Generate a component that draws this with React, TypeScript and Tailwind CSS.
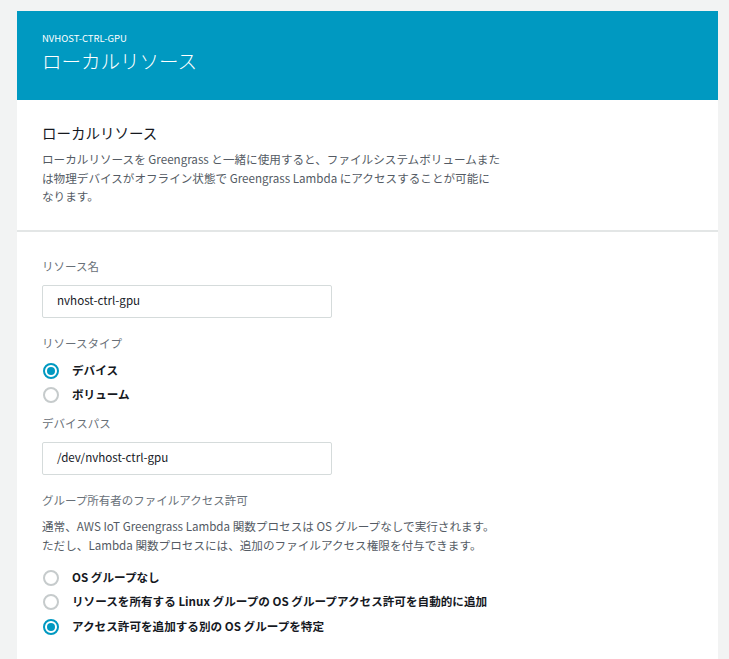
import React from "react";

function Radio({ checked, label }: { checked?: boolean; label: string }) {
  return (
    <div className="flex h-[24.5px] items-center">
      <div className="ml-[1px] flex h-[16px] w-[16px] items-center justify-center">
        {checked ? (
          <div className="flex h-[16px] w-[16px] items-center justify-center rounded-full border-2 border-[#0099c1] bg-white">
            <div className="h-[8px] w-[8px] rounded-full bg-[#0099c1]" />
          </div>
        ) : (
          <div className="h-[16px] w-[16px] rounded-full border-2 border-[#c6cbcc] bg-white" />
        )}
      </div>
      <span className="ml-[13px] text-[11.6px] font-bold leading-none text-[#16191f]">{label}</span>
    </div>
  );
}

function Label({ children, className = "" }: { children: React.ReactNode; className?: string }) {
  return <div className={`h-[18px] text-[11.5px] leading-[18px] text-[#687078] ${className}`}>{children}</div>;
}

function Input({ value, className = "" }: { value: string; className?: string }) {
  return (
    <div
      className={`flex h-[33px] w-[290px] items-center rounded-[2px] border border-[#d5dbdb] bg-white pl-[14px] text-[11.6px] text-[#16191f] ${className}`}
    >
      {value}
    </div>
  );
}

export default function App() {
  return (
    <div className="min-h-screen bg-[#f2f3f3] pl-[17px] pr-[11px] pt-[11px] font-['Noto_Sans_CJK_JP',sans-serif]">
      <div className="bg-white">
        <div className="h-[89px] bg-[#0099c1] px-[25px] pt-[20px] text-white">
          <div className="text-[9.5px] leading-[14px]">NVHOST-CTRL-GPU</div>
          <div className="mt-[2px] text-[19.5px] font-light leading-[28px]">ローカルリソース</div>
        </div>
        <div className="border-b-2 border-[#e3e6e6] px-[25px] pb-[24px] pt-[22px]">
          <div className="text-[14.5px] leading-[22px] text-[#16191f]">ローカルリソース</div>
          <div className="mt-[6px] text-[11.6px] leading-[18.5px] text-[#545b64]">
            ローカルリソースを Greengrass と一緒に使用すると、ファイルシステムボリュームまた
            <br />
            は物理デバイスがオフライン状態で Greengrass Lambda にアクセスすることが可能に
            <br />
            なります。
          </div>
        </div>
        <div className="px-[25px] pb-[24px] pt-[25px]">
          <Label>リソース名</Label>
          <Input value="nvhost-ctrl-gpu" className="mt-[10px]" />
          <Label className="mt-[16px]">リソースタイプ</Label>
          <div className="mt-[7px]">
            <Radio checked label="デバイス" />
            <Radio label="ボリューム" />
          </div>
          <Label className="mt-[6px]">デバイスパス</Label>
          <Input value="/dev/nvhost-ctrl-gpu" className="mt-[10px]" />
          <Label className="mt-[16px]">グループ所有者のファイルアクセス許可</Label>
          <div className="mt-[8px] text-[11.6px] leading-[19px] text-[#545b64]">
            通常、AWS IoT Greengrass Lambda 関数プロセスは OS グループなしで実行されます。
            <br />
            ただし、Lambda 関数プロセスには、追加のファイルアクセス権限を付与できます。
          </div>
          <div className="mt-[11px]">
            <Radio label="OS グループなし" />
            <Radio label="リソースを所有する Linux グループの OS グループアクセス許可を自動的に追加" />
            <Radio checked label="アクセス許可を追加する別の OS グループを特定" />
          </div>
        </div>
      </div>
    </div>
  );
}
